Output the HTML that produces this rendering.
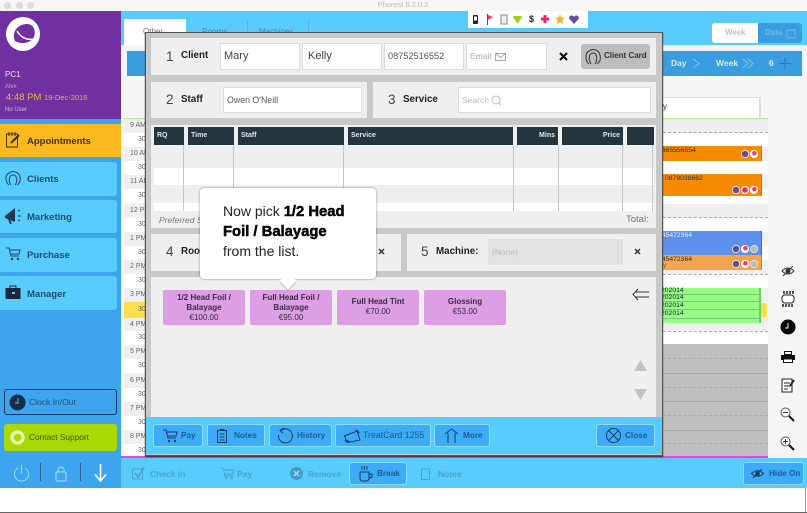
<!DOCTYPE html>
<html><head><meta charset="utf-8"><style>
html,body{margin:0;padding:0;background:#fff}
#r{position:relative;width:807px;height:513px;overflow:hidden;background:#fff;font-family:"Liberation Sans",sans-serif;color:#1d3a4c;filter:blur(.3px)}
#r div,#r svg{position:absolute}
.t{white-space:nowrap;line-height:12px}
.h{background:#23363f;color:#dfe5e8;font-size:7px;font-weight:bold;line-height:18px;height:18px;top:127px;box-sizing:border-box;padding:0 3px}
.v{background:#c6c6c6;width:1px;top:145px;height:66px}
.p{background:#efefef}
.i{background:#fff;border:1px solid #dcdcdc;box-sizing:border-box;font-size:9px;color:#555;white-space:nowrap}
.n{font-size:13.500px;color:#444;line-height:14px}
.l{font-size:9.800px;font-weight:bold;color:#222;line-height:12px;white-space:nowrap}
.s{background:#dd9fe3;border-radius:2px;top:290px;height:35px;width:82px;text-align:center;font-size:8px;line-height:10px;color:#3a2a44;box-sizing:border-box;font-weight:bold}
.s span{font-weight:normal;display:block}
.b{background:#3eabf8;border:1px solid #8ddcff;border-radius:3px;box-sizing:border-box;height:23px;top:424px;font-size:8.200px;line-height:21px;color:#1a5d8d;font-weight:bold;white-space:nowrap}
.m{left:0;width:117px;height:34px;background:#58ccff;border-radius:0 3px 3px 0;font-size:9.500px;font-weight:bold;color:#1d4b6c;line-height:36px;text-indent:27px}
.a{left:124px;width:22px;font-size:7px;line-height:14px;height:14px;color:#666;white-space:nowrap}
.a1{background:#efefef;text-indent:6px}
.a2{background:#fff;text-indent:14px}
.g{left:663px;width:105px;height:14px}
.g1{background:#efefef}
.g2{background:#fff}
.d{left:663px;width:105px;height:0;border-top:1px dashed #aaa}
.o{left:663px;height:1px;width:105px;background:#aaa}
.c{width:8px;height:8px;border-radius:50%;background:#fff}
.ch{background:radial-gradient(circle,#6b4a9a 0 3px,#fff 3.500px)}
.cf{background:radial-gradient(circle at 55% 40%,#ee3a6d 0 2px,#fff 2.500px)}
.cp{background:radial-gradient(circle,#f0266d 0 2.500px,#fff 3px)}
.cg{background:radial-gradient(circle,#bbb 0 3px,#eee 3.500px)}
.e{color:#2c2c2c;font-size:6.800px;line-height:8px;white-space:nowrap}
.f{font-size:8.500px;font-weight:bold;color:#4ba3cc;white-space:nowrap;line-height:12px;top:468px}
</style></head><body><div id="r">

<div style="left:0;top:0;width:807px;height:11px;background:#f6f6f6"></div>
<div style="left:4px;top:2px;width:7px;height:7px;border-radius:50%;background:#dcdcdc"></div>
<div style="left:16px;top:2px;width:7px;height:7px;border-radius:50%;background:#dcdcdc"></div>
<div style="left:27px;top:2px;width:7px;height:7px;border-radius:50%;background:#dcdcdc"></div>
<div class="t" style="left:363px;top:-1px;width:80px;text-align:center;font-size:7.500px;color:#bdbdbd">Phorest 8.2.0.2</div>

<div style="left:0;top:11px;width:807px;height:477px;background:#f5f5f5"></div>
<div style="left:121px;top:11px;width:686px;height:34px;background:#58ccff"></div>
<div style="left:124px;top:19px;width:62px;height:27px;background:#fff"></div>
<div class="t" style="left:143px;top:26px;font-size:8px;color:#777">Other</div>
<div class="t" style="left:202px;top:26px;font-size:8px;color:#3d8db5">Rooms</div>
<div class="t" style="left:259px;top:26px;font-size:8px;color:#3d8db5">Machines</div>
<div style="left:247px;top:20px;width:1px;height:25px;background:#4ab6e6"></div>
<div style="left:308px;top:20px;width:1px;height:25px;background:#4ab6e6"></div>

<div style="left:468px;top:11px;width:120px;height:17px;background:#fff"></div>
<svg style="left:472px;top:14px" width="7" height="11"><rect x="1" y="1" width="5" height="9" rx="1" fill="#222"/><rect x="2" y="2.500" width="3" height="4" fill="#fff"/></svg>
<svg style="left:486px;top:14px" width="8" height="11"><path d="M1.500 0V11" stroke="#555"/><path d="M2 1L7 3L2 6Z" fill="#ee3a6d"/></svg>
<svg style="left:500px;top:14px" width="8" height="11"><rect x="1" y="1" width="6" height="9" fill="#eee" stroke="#888"/></svg>
<svg style="left:513px;top:15px" width="9" height="9"><path d="M1 2H8L4.500 7Z" fill="#a3cf1e" stroke="#a3cf1e" stroke-width="2" stroke-linejoin="round"/></svg>
<div class="t" style="left:529px;top:13px;font-size:9px;font-weight:bold;color:#222">$</div>
<svg style="left:541px;top:15px" width="8" height="8"><path d="M4 0V8M0 4H8" stroke="#f0266d" stroke-width="3"/></svg>
<svg style="left:555px;top:14px" width="10" height="10"><path d="M5 0L6.500 3.400L10 3.800L7.400 6.200L8.100 10L5 8L1.900 10L2.600 6.200L0 3.800L3.500 3.400Z" fill="#f5b833"/></svg>
<svg style="left:569px;top:15px" width="10" height="9"><path d="M5 9L0.500 4C-1 1 3.500-1 5 2C6.500-1 11 1 9.500 4Z" fill="#6b4a9a"/></svg>

<div style="left:712px;top:23px;width:46px;height:20px;background:#fff;border-radius:3px 0 0 3px"></div>
<div style="left:758px;top:23px;width:44px;height:20px;background:#3a9de0;border-radius:0 3px 3px 0"></div>
<div class="t" style="left:725px;top:27px;font-size:8px;font-weight:bold;color:#c2c2c2">Week</div>
<div class="t" style="left:765px;top:27px;font-size:8px;font-weight:bold;color:#6cb9ea">Date</div>
<svg style="left:786px;top:28px" width="10" height="11"><rect x="1" y="2" width="8" height="8" fill="none" stroke="#6cb9ea"/></svg>

<div style="left:127px;top:51px;width:675px;height:25px;background:#3a9de0"></div>
<div class="t" style="left:671px;top:57px;font-size:8.500px;font-weight:bold;color:#d5ecfb">Day</div>
<svg style="left:692px;top:58px" width="9" height="11"><path d="M1 1L7 5.500L1 10" fill="none" stroke="#7cc3ef"/></svg>
<div class="t" style="left:716px;top:57px;font-size:8.500px;font-weight:bold;color:#d5ecfb">Week</div>
<svg style="left:742px;top:58px" width="13" height="11"><path d="M1 1L6 5.500L1 10M6 1L11 5.500L6 10" fill="none" stroke="#7cc3ef"/></svg>
<div class="t" style="left:769px;top:57px;font-size:8.500px;font-weight:bold;color:#d5ecfb">6</div>
<svg style="left:779px;top:58px" width="12" height="11"><path d="M6 0V11M0 5.500H12" stroke="#2a78b5"/></svg>

<!-- time column -->
<div style="left:124px;top:118px;width:22px;height:1px;background:#b8e88f"></div>
<div class="a a1" style="top:119px">9 AM</div><div class="a a2" style="top:133px">30</div>
<div class="a a1" style="top:147px;height:14px">10 AM</div><div class="a a2" style="top:161px">30</div>
<div class="a a1" style="top:175px">11 AM</div><div class="a a2" style="top:189px">30</div>
<div class="a a1" style="top:204px">12 PM</div><div class="a a2" style="top:218px">30</div>
<div class="a a1" style="top:232px">1 PM</div><div class="a a2" style="top:246px">30</div>
<div class="a a1" style="top:260px">2 PM</div><div class="a a2" style="top:274px">30</div>
<div class="a a1" style="top:288px">3 PM</div><div class="a a2" style="top:302px;background:#fbe04d;height:16px;line-height:16px">30</div>
<div class="a a1" style="top:318px">4 PM</div><div class="a a2" style="top:331px">30</div>
<div class="a a1" style="top:345px">5 PM</div><div class="a a2" style="top:359px">30</div>
<div class="a a1" style="top:374px">6 PM</div><div class="a a2" style="top:388px">30</div>
<div class="a a1" style="top:402px">7 PM</div><div class="a a2" style="top:416px">30</div>
<div class="a a1" style="top:430px">8 PM</div><div class="a a2" style="top:444px;height:12px">30</div>

<!-- grid -->
<div style="left:663px;top:97px;width:98px;height:21px;background:#fff;border-right:2px solid #ddd;border-top:1px solid #ddd;box-sizing:border-box"></div>
<div class="t" style="left:663px;top:101px;font-size:8px;color:#333">y</div>
<div style="left:663px;top:118px;width:105px;height:1px;background:#b8e88f"></div>
<div class="g g1" style="top:119px"></div><div class="g g2" style="top:133px"></div>
<div class="g g1" style="top:147px"></div><div class="g g2" style="top:161px"></div>
<div class="g g1" style="top:175px"></div><div class="g g2" style="top:189px;height:15px"></div>
<div class="g g1" style="top:204px"></div><div class="g g2" style="top:218px"></div>
<div class="g g1" style="top:232px"></div><div class="g g2" style="top:246px"></div>
<div class="g g1" style="top:260px"></div><div class="g g2" style="top:274px"></div>
<div class="g g1" style="top:288px"></div><div class="g g2" style="top:302px"></div>
<div class="g g1" style="top:316px"></div><div class="g g2" style="top:331px;height:13px"></div>
<div style="left:663px;top:344px;width:105px;height:112px;background:#bfbfbf"></div>
<div class="d" style="top:132px"></div><div class="d" style="top:217px"></div><div class="d" style="top:274px"></div><div class="d" style="top:331px"></div>
<div class="d" style="top:358px"></div><div class="d" style="top:387px"></div><div class="d" style="top:415px"></div><div class="d" style="top:443px"></div>
<div class="o" style="top:373px"></div><div class="o" style="top:401px"></div><div class="o" style="top:430px"></div>

<div style="left:663px;top:146px;width:98px;height:15px;background:#f68b00;border-right:1px solid #c97a20"></div>
<div class="e" style="left:658px;top:147px">6665556554</div>
<div class="c ch" style="left:741px;top:150px"></div><div class="c cf" style="left:750px;top:150px"></div>
<div style="left:663px;top:174px;width:98px;height:22px;background:#f68b00;border-right:1px solid #c97a20"></div>
<div class="e" style="left:665px;top:175px">0879038662</div>
<div class="c ch" style="left:732px;top:186px"></div><div class="c cp" style="left:741px;top:186px"></div><div class="c cf" style="left:750px;top:186px"></div>
<div style="left:663px;top:231px;width:98px;height:24px;background:#5e90ee;border-right:1px solid #3e6ec0"></div>
<div class="e" style="left:658px;top:232px;color:#e6eeff">545472364</div>
<div class="c ch" style="left:732px;top:245px"></div><div class="c cf" style="left:741px;top:245px"></div><div class="c cg" style="left:750px;top:245px"></div>
<div style="left:663px;top:255px;width:98px;height:15px;background:#f2a44f;border-right:1px solid #c97a20"></div>
<div class="e" style="left:658px;top:256px">545472364</div>
<div class="e" style="left:663px;top:262px;color:#7a5a30">y</div>
<div class="c ch" style="left:732px;top:260px"></div><div class="c cf" style="left:741px;top:260px"></div><div class="c cg" style="left:750px;top:260px"></div>
<div style="left:663px;top:288px;width:98px;height:35px;background:#98fb84;border-right:2px solid #70cc60;box-sizing:border-box"></div>
<div class="o" style="top:294px;width:98px;background:#70d070"></div>
<div class="o" style="top:301px;width:98px;background:#70d070"></div>
<div class="o" style="top:309px;width:98px;background:#70d070"></div>
<div class="o" style="top:318px;width:98px;background:#70d070"></div>
<div class="e" style="left:661px;top:287px;color:#123">202014</div>
<div class="e" style="left:661px;top:294px;color:#123">202014</div>
<div class="e" style="left:661px;top:302px;color:#123">202014</div>
<div class="e" style="left:661px;top:310px;color:#123">202014</div>
<div style="left:761px;top:303px;width:6px;height:14px;background:#fbe04d"></div>

<!-- right tools -->
<svg style="left:781px;top:265px" width="14" height="12"><path d="M1 6Q7 0 13 6Q7 12 1 6Z" fill="none" stroke="#333"/><circle cx="7" cy="6" r="2.500" fill="#333"/><path d="M2 11L12 1" stroke="#333"/></svg>
<svg style="left:781px;top:291px" width="14" height="16"><rect x="1" y="4" width="12" height="8" rx="3" fill="#fff" stroke="#222"/><path d="M3 0V3M6 0V3M9 0V3M12 0V3M2 13V16M5 13V16M8 13V16M11 13V16" stroke="#222" stroke-width="1.500"/></svg>
<svg style="left:780px;top:319px" width="16" height="16"><circle cx="8" cy="8" r="7.500" fill="#000"/><path d="M8 4V9H5" stroke="#fff" fill="none"/></svg>
<svg style="left:781px;top:351px" width="14" height="12"><rect x="3.500" y="0.500" width="7" height="3" fill="#fff" stroke="#111"/><rect x="0" y="4" width="14" height="5" fill="#111"/><rect x="2.500" y="8" width="9" height="3.500" fill="#fff" stroke="#111"/></svg>
<svg style="left:781px;top:377px" width="14" height="16"><rect x="1" y="2" width="10" height="13" fill="#fff" stroke="#222"/><path d="M3 6H9M3 9H9M3 12H7" stroke="#222"/><path d="M9 9L13 3" stroke="#222" stroke-width="2"/></svg>
<svg style="left:780px;top:407px" width="15" height="15"><circle cx="5.500" cy="5.500" r="4.500" fill="#fff" stroke="#555"/><path d="M3 5.500H8" stroke="#333"/><path d="M9 9L14 14" stroke="#111" stroke-width="2"/></svg>
<svg style="left:780px;top:436px" width="15" height="15"><circle cx="5.500" cy="5.500" r="4.500" fill="#fff" stroke="#555"/><path d="M3 5.500H8M5.500 3V8" stroke="#333"/><path d="M9 9L14 14" stroke="#111" stroke-width="2"/></svg>

<!-- sidebar -->
<div style="left:0;top:11px;width:121px;height:477px;background:#3ca5ee"></div>
<div style="left:0;top:11px;width:121px;height:108px;background:#7030a0"></div>
<svg style="left:6px;top:17px" width="35" height="35"><circle cx="17" cy="17" r="17" fill="#fff"/><path d="M9 24C5 15 12 7 21 7C28 7 30 14 28 20C25 26 16 28 9 24Z" fill="#7030a0"/><path d="M11 14Q17 24 28 22" fill="none" stroke="#fff" stroke-width="1.500"/><circle cx="7" cy="26" r="2" fill="#fff"/></svg>
<div class="t" style="left:5px;top:69px;font-size:8px;color:#e6dcf0">PC1</div>
<div class="t" style="left:5px;top:81px;font-size:6px;color:#b9a0cf">Alex</div>
<div class="t" style="left:6px;top:92px;font-size:9.500px;color:#e8b63e">4:48 PM <span style="font-size:7.500px">19-Dec-2016</span></div>
<div class="t" style="left:5px;top:104px;font-size:6px;color:#cdbcdc">No User</div>
<div class="m" style="top:124px;height:33px;background:#fbb81f;border-radius:0;width:121px;line-height:35px;color:#3b3216">Appointments</div>
<svg style="left:6px;top:131px" width="15" height="17"><rect x="0.500" y="3" width="11" height="13" fill="none" stroke="#3b3216"/><path d="M3 1V5M6 1V5M9 1V5" stroke="#3b3216"/><path d="M5 12L13 4" stroke="#3b3216" stroke-width="2"/></svg>
<div class="m" style="top:162px">Clients</div>
<svg style="left:4px;top:170px" width="18" height="18"><path d="M5 15C1 12 1 5 5 3C9 0 15 2 16 7C17 11 15 14 13 15" fill="none" stroke="#1d4b6c"/><path d="M7 15C4 11 5 5 9 5C13 5 14 11 11 15" fill="none" stroke="#1d4b6c"/></svg>
<div class="m" style="top:200px;height:33px;line-height:35px">Marketing</div>
<svg style="left:4px;top:207px" width="18" height="18"><path d="M1 9L11 1V15L1 11Z" fill="#1d3a55"/><path d="M5 12L7 17" stroke="#1d3a55" stroke-width="2"/><path d="M14 4L16 3M14 9H17M14 13L16 14" stroke="#1d3a55"/></svg>
<div class="m" style="top:238px">Purchase</div>
<svg style="left:6px;top:247px" width="15" height="14"><path d="M0 1H3L5 9H13M4 3H14L13 7H5" fill="none" stroke="#1d4b6c"/><circle cx="6" cy="12" r="1.200" fill="#1d4b6c"/><circle cx="12" cy="12" r="1.200" fill="#1d4b6c"/></svg>
<div class="m" style="top:276px;line-height:37px">Manager</div>
<svg style="left:5px;top:285px" width="16" height="15"><rect x="0.500" y="3" width="15" height="11" fill="#1d2a3a"/><path d="M5 3V1H11V3" fill="none" stroke="#1d2a3a"/><rect x="7" y="7" width="3" height="2" fill="#58ccff"/></svg>

<div style="left:4px;top:389px;width:113px;height:26px;border:1px solid #123a63;border-radius:3px;box-sizing:border-box"></div>
<svg style="left:9px;top:394px" width="17" height="17"><circle cx="8.500" cy="8.500" r="8" fill="#12304e"/><path d="M9 4V9H6" stroke="#9ac" fill="none"/></svg>
<div class="t" style="left:29px;top:396px;font-size:8.500px;color:#1e4f7a">Clock In/Out</div>
<div style="left:4px;top:424px;width:113px;height:27px;background:#a8d900;border-radius:3px"></div>
<svg style="left:10px;top:430px" width="15" height="15"><circle cx="7.500" cy="7.500" r="5.500" fill="none" stroke="#e6f5b0" stroke-width="3.500"/></svg>
<div class="t" style="left:29px;top:431px;font-size:8.300px;color:#3b5a18">Contact Support</div>
<svg style="left:12px;top:464px" width="18" height="20"><path d="M6 4A7 7 0 1 0 13 4" fill="none" stroke="#9fd6f7"/><path d="M9.500 1V10" stroke="#9fd6f7"/></svg>
<div style="left:40px;top:463px;width:1px;height:18px;background:#27629a"></div>
<svg style="left:55px;top:465px" width="13" height="17"><rect x="1" y="7" width="10" height="9" rx="1" fill="none" stroke="#a8dcf9"/><path d="M3 7V4Q6 0 9 4V7" fill="none" stroke="#a8dcf9"/></svg>
<div style="left:80px;top:463px;width:1px;height:18px;background:#27629a"></div>
<svg style="left:94px;top:464px" width="13" height="18"><path d="M6.500 0V16M1 10.500L6.500 17L12 10.500" fill="none" stroke="#fff" stroke-width="1.600"/></svg>

<!-- bottom bar -->
<div style="left:121px;top:456px;width:647px;height:2px;background:#e844e0"></div>
<div style="left:121px;top:458px;width:686px;height:30px;background:#58ccff"></div>
<svg style="left:132px;top:466px" width="14" height="14"><rect x="0.500" y="3" width="10" height="10" fill="none" stroke="#4ba3cc"/><path d="M3 7L6 11L12 1" fill="none" stroke="#4ba3cc" stroke-width="1.500"/></svg>
<div class="f" style="left:150px">Check In</div>
<svg style="left:220px;top:467px" width="14" height="13"><path d="M0 1H3L5 9H13M4 3H14L13 7H5" fill="none" stroke="#4ba3cc"/><circle cx="6" cy="11" r="1.200" fill="#4ba3cc"/><circle cx="12" cy="11" r="1.200" fill="#4ba3cc"/></svg>
<div class="f" style="left:237px">Pay</div>
<svg style="left:290px;top:467px" width="13" height="13"><circle cx="6.500" cy="6.500" r="6.500" fill="#3f9ec9"/><path d="M4 4L9 9M9 4L4 9" stroke="#a5e2fb" stroke-width="1.300"/></svg>
<div class="f" style="left:308px">Remove</div>
<div class="b" style="left:349px;top:462px;width:58px;padding-left:27px;font-weight:bold;color:#1a5d8d">Break</div>
<svg style="left:358px;top:465px" width="16" height="17"><path d="M2 7H11V13Q11 16 8 16H5Q2 16 2 13Z" fill="none" stroke="#0f3f66"/><path d="M11 9H14V12L11 13" fill="none" stroke="#0f3f66"/><path d="M4 1V5M6.500 1V5M9 1V5" stroke="#0f3f66"/></svg>
<svg style="left:421px;top:468px" width="10" height="12"><rect x="0.500" y="1" width="8" height="10.500" fill="none" stroke="#4ba3cc"/></svg>
<div class="f" style="left:438px">Notes</div>
<div class="b" style="left:743px;top:462px;width:61px;padding-left:25px;color:#1a5d8d">Hide On</div>
<svg style="left:751px;top:468px" width="13" height="11"><path d="M0.500 5.500Q6.500 0 12.500 5.500Q6.500 11 0.500 5.500Z" fill="none" stroke="#0f3f66"/><circle cx="6.500" cy="5.500" r="2.300" fill="#0f3f66"/><path d="M2 10L11 1" stroke="#0f3f66"/></svg>
<div style="left:0;top:488px;width:807px;height:24px;background:#fff"></div>
<div style="left:0;top:512px;width:807px;height:1px;background:#666"></div>
<div style="left:805px;top:488px;width:1px;height:24px;background:#999"></div>

<!-- modal -->
<div style="left:145px;top:32px;width:518px;height:424px;background:#c8c8c8;border:1px solid #555;box-sizing:border-box;box-shadow:0 1px 1px #333"></div>

<div class="p" style="left:151px;top:38px;width:505px;height:37px"></div>
<div class="n" style="left:166px;top:50px">1</div>
<div class="l" style="left:181px;top:50px">Client</div>
<div class="i" style="left:220px;top:43px;width:80px;height:27px;font-size:11px;line-height:25px;padding-left:3px;color:#444">Mary</div>
<div class="i" style="left:302px;top:43px;width:80px;height:27px;font-size:11px;line-height:25px;padding-left:5px;color:#444">Kelly</div>
<div class="i" style="left:384px;top:43px;width:80px;height:27px;font-size:9.200px;line-height:25px;padding-left:3px">08752516552</div>
<div class="i" style="left:466px;top:43px;width:81px;height:27px;font-size:8.500px;line-height:25px;padding-left:3px;color:#aaa">Email</div>
<svg style="left:495px;top:53px" width="11" height="8"><rect x="0.500" y="0.500" width="10" height="7" fill="none" stroke="#aaa"/><path d="M0.500 0.500L5.500 4.500L10.500 0.500" fill="none" stroke="#aaa"/></svg>
<svg style="left:559px;top:52px" width="9" height="9"><path d="M1 1L8 8M8 1L1 8" stroke="#111" stroke-width="2.200"/></svg>
<div style="left:581px;top:44px;width:69px;height:25px;background:#bdbdbd;border-radius:3px"></div>
<svg style="left:584px;top:48px" width="18" height="18"><path d="M5 16C1 13 1 5 5 3C9 0 15 2 16 7C17 11 16 14 13 16" fill="none" stroke="#333"/><path d="M7 16C4 11 5 5 9 5C13 5 14 11 11 16" fill="none" stroke="#333"/></svg>
<div class="t" style="left:604px;top:50px;font-size:8px;font-weight:bold;color:#333">Client Card</div>

<div class="p" style="left:151px;top:82px;width:216px;height:36px"></div>
<div class="n" style="left:166px;top:93px">2</div>
<div class="l" style="left:181px;top:94px">Staff</div>
<div class="i" style="left:223px;top:87px;width:139px;height:26px;font-size:8.800px;line-height:24px;padding-left:3px">Owen O'Neill</div>
<div class="p" style="left:373px;top:82px;width:283px;height:36px"></div>
<div class="n" style="left:388px;top:93px">3</div>
<div class="l" style="left:403px;top:94px">Service</div>
<div class="i" style="left:458px;top:87px;width:193px;height:26px;font-size:8.500px;line-height:24px;padding-left:3px;color:#bbb">Search</div>
<svg style="left:491px;top:95px" width="11" height="11"><circle cx="5" cy="5" r="4" fill="none" stroke="#bbb"/><path d="M8 8L10 10" stroke="#bbb"/></svg>

<div class="p" style="left:151px;top:125px;width:505px;height:103px"></div>
<div class="h" style="left:154px;width:30px">RQ</div>
<div class="h" style="left:188px;width:46px">Time</div>
<div class="h" style="left:238px;width:106px">Staff</div>
<div class="h" style="left:348px;width:165px">Service</div>
<div class="h" style="left:517px;width:41px;text-align:right">Mins</div>
<div class="h" style="left:562px;width:61px;text-align:right">Price</div>
<div class="h" style="left:627px;width:27px"></div>
<div style="left:154px;top:168px;width:500px;height:17px;background:#fff"></div>
<div style="left:154px;top:203px;width:500px;height:8px;background:#fff"></div>
<div class="v" style="left:183px"></div><div class="v" style="left:233px"></div><div class="v" style="left:343px"></div><div class="v" style="left:513px"></div><div class="v" style="left:558px"></div><div class="v" style="left:622px"></div><div class="v" style="left:652px"></div>
<div class="t" style="left:159px;top:214px;font-size:8.500px;font-style:italic;color:#777">Preferred Staff</div>
<div class="t" style="left:626px;top:214px;font-size:9.500px;color:#777">Total:</div>

<div class="p" style="left:151px;top:234px;width:250px;height:37px"></div>
<div class="n" style="left:166px;top:245px">4</div>
<div class="l" style="left:181px;top:246px">Room</div>
<svg style="left:378px;top:248px" width="7" height="7"><path d="M1 1L6 6M6 1L1 6" stroke="#333" stroke-width="1.500"/></svg>
<div class="p" style="left:407px;top:234px;width:249px;height:37px"></div>
<div class="n" style="left:421px;top:245px">5</div>
<div class="l" style="left:436px;top:246px">Machine:</div>
<div style="left:488px;top:239px;width:135px;height:26px;background:#e2e2e2;font-size:8.500px;line-height:27px;color:#bbb;text-indent:4px">(None)</div>
<svg style="left:634px;top:248px" width="7" height="7"><path d="M1 1L6 6M6 1L1 6" stroke="#333" stroke-width="1.500"/></svg>

<div class="p" style="left:151px;top:277px;width:505px;height:141px"></div>
<div class="s" style="left:163px;padding-top:3px">1/2 Head Foil /<br>Balayage<span>€100.00</span></div>
<div class="s" style="left:250px;padding-top:3px">Full Head Foil /<br>Balayage<span>€95.00</span></div>
<div class="s" style="left:337px;padding-top:7px">Full Head Tint<span>€70.00</span></div>
<div class="s" style="left:424px;padding-top:7px">Glossing<span>€53.00</span></div>
<svg style="left:632px;top:288px" width="17" height="13"><path d="M17 4H3M17 9H3M6 1L1 6.500L6 12" fill="none" stroke="#333"/></svg>
<svg style="left:634px;top:360px" width="13" height="11"><path d="M6.500 0L13 11H0Z" fill="#c2c2c2"/></svg>
<svg style="left:634px;top:389px" width="13" height="11"><path d="M6.500 11L13 0H0Z" fill="#c2c2c2"/></svg>

<div style="left:146px;top:417px;width:516px;height:37px;background:#58ccff"></div>
<div class="b" style="left:153px;width:50px;padding-left:27px">Pay</div>
<svg style="left:163px;top:429px" width="15" height="14"><path d="M0 1H3L5 9H13M4 3H14L13 7H5" fill="none" stroke="#0f3f66"/><circle cx="6" cy="12" r="1.200" fill="#0f3f66"/><circle cx="12" cy="12" r="1.200" fill="#0f3f66"/></svg>
<div class="b" style="left:207px;width:58px;padding-left:26px">Notes</div>
<svg style="left:217px;top:429px" width="11" height="14"><rect x="0.500" y="1.500" width="9" height="12" fill="none" stroke="#0f3f66"/><path d="M3 0.500H7M2.500 5H7.500M2.500 8H7.500M2.500 11H7.500" stroke="#0f3f66"/></svg>
<div class="b" style="left:269px;width:63px;padding-left:27px">History</div>
<svg style="left:277px;top:428px" width="16" height="16"><path d="M4 2.500A7 7 0 1 1 1.500 7" fill="none" stroke="#0f3f66"/><path d="M7 0L3 2.500L6 5" fill="none" stroke="#0f3f66"/></svg>
<div class="b" style="left:335px;width:96px;padding-left:27px;font-weight:normal;font-size:8.800px">TreatCard 1255</div>
<svg style="left:344px;top:429px" width="17" height="14"><path d="M0.500 7L13 2L16 11L3 13.500Z" fill="none" stroke="#0f3f66"/><path d="M1 11L5 13M12 1L15 4" stroke="#0f3f66" stroke-width="2"/></svg>
<div class="b" style="left:434px;width:56px;padding-left:28px">More</div>
<svg style="left:444px;top:428px" width="15" height="15"><path d="M1 6L7.500 1L14 6M4 5V15M11 5V15" fill="none" stroke="#0f3f66"/></svg>
<div class="b" style="left:596px;width:59px;padding-left:28px">Close</div>
<svg style="left:606px;top:428px" width="15" height="15"><circle cx="7.500" cy="7.500" r="7" fill="none" stroke="#0f3f66"/><path d="M2.500 2.500L12.500 12.500M12.500 2.500L2.500 12.500" stroke="#0f3f66"/></svg>

<!-- tooltip -->
<div style="left:200px;top:188px;width:176px;height:91px;background:#fff;border-radius:4px;box-shadow:0 0 2px rgba(0,0,0,.45)"></div>
<div style="left:282px;top:275px;width:12px;height:12px;background:#fff;transform:rotate(45deg);box-shadow:1px 1px 1px rgba(0,0,0,.2)"></div>
<div class="t" style="left:223px;top:202px;font-size:14px;line-height:19px;color:#222;white-space:nowrap">Now pick <b style="color:#000;font-size:14.800px;-webkit-text-stroke:.5px #000">1/2 Head</b><br><b style="color:#000;font-size:14.800px;-webkit-text-stroke:.5px #000">Foil / Balayage</b><br>from the list.</div>

</div></body></html>
